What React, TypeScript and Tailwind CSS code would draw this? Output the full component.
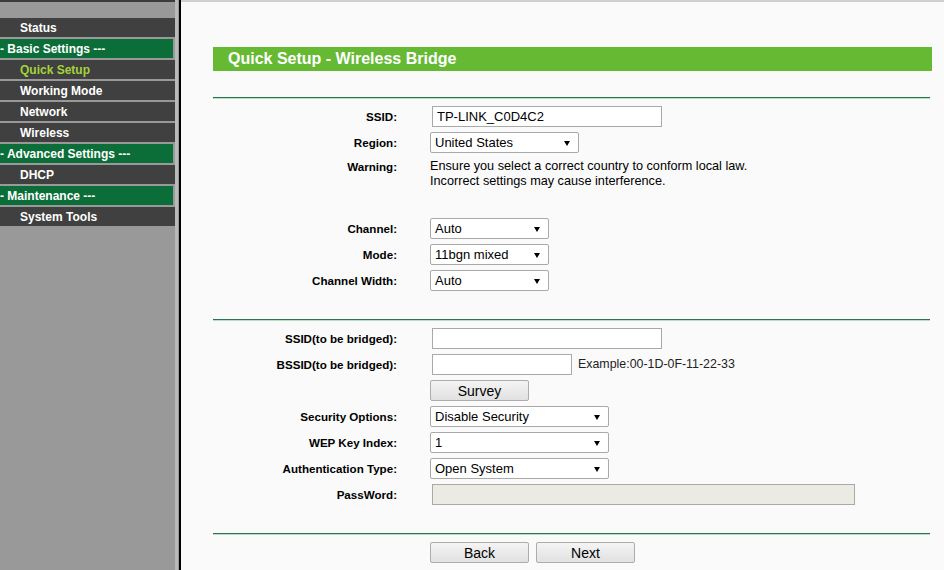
const menu = [
  { label: "Status", kind: "item" },
  { label: "- Basic Settings ---", kind: "group" },
  { label: "Quick Setup", kind: "active" },
  { label: "Working Mode", kind: "item" },
  { label: "Network", kind: "item" },
  { label: "Wireless", kind: "item" },
  { label: "- Advanced Settings ---", kind: "group" },
  { label: "DHCP", kind: "item" },
  { label: "- Maintenance ---", kind: "group" },
  { label: "System Tools", kind: "item" },
]

function Arrow() {
  return (
    <svg width="6" height="5" viewBox="0 0 6 5">
      <path d="M0 0H6L3 5Z" fill="#000" />
    </svg>
  )
}

function SelectBox({ value, width }: { value: string; width: string }) {
  return (
    <div
      className={
        "flex items-center justify-between h-[21px] border border-[#a9a9a9] rounded-[2px] bg-white pl-[4px] pr-[8px] pt-[1px] text-[13px] text-black " +
        width
      }
    >
      <span>{value}</span>
      <Arrow />
    </div>
  )
}

function TextBox({ value, width, disabled }: { value?: string; width: string; disabled?: boolean }) {
  return (
    <div
      className={
        "ml-[2px] flex items-center h-[21px] border border-[#a9a9a9] pl-[4px] pt-[1px] text-[13px] text-black " +
        (disabled ? "bg-[#ebebe4] " : "bg-white ") +
        width
      }
    >
      {value}
    </div>
  )
}

function Btn({ label }: { label: string }) {
  return (
    <div className="flex items-center justify-center w-[99px] h-[21px] border border-[#adadad] rounded-[2px] bg-gradient-to-b from-[#f4f4f4] to-[#e1e1e1] pt-[1px] text-[14px] text-black">
      {label}
    </div>
  )
}

function Row({ label, children }: { label: string; children: React.ReactNode }) {
  return (
    <div className="flex items-center h-[21px]">
      <div className="w-[184px] text-right text-[11.6px] font-bold text-black">{label}</div>
      <div className="ml-[33px] flex items-center">{children}</div>
    </div>
  )
}

function Divider() {
  return (
    <div className="w-[717px] h-[2px] border-t border-[#2b7450] bg-[#b9dcc7]" />
  )
}

export default function App() {
  return (
    <div className="flex w-[944px] h-[570px] overflow-hidden font-['Liberation_Sans',Arial,sans-serif]">
      {/* left menu */}
      <div className="w-[175px] shrink-0 bg-[#999999] border-t-2 border-[#3c3c3c] pt-[16px] flex flex-col gap-[2px]">
        {menu.map((m, i) =>
          m.kind === "group" ? (
            <div
              key={i}
              className="w-[173px] h-[19px] bg-[#0b6e38] text-white text-[12px] font-bold leading-[20px] whitespace-nowrap"
            >
              {m.label}
            </div>
          ) : (
            <div
              key={i}
              className={
                "w-[175px] h-[19px] bg-[#404040] text-[12px] font-bold leading-[20px] pl-[20px] " +
                (m.kind === "active" ? "text-[#a3d33b]" : "text-white")
              }
            >
              {m.label}
            </div>
          )
        )}
      </div>
      <div className="w-[3px] shrink-0 bg-[#b9b9b9]" />
      <div className="w-[1px] shrink-0 bg-[#9a9a9a]" />
      <div className="w-[2px] shrink-0 bg-black" />

      {/* main */}
      <div className="flex-1 bg-[#fafafa] border-t-2 border-[#cfcfcf] pl-[32px] pt-[45px]">
        <div className="w-[719px] h-[24px] bg-[#66b933] pl-[15px] text-white text-[16px] font-bold leading-[24px]">
          Quick Setup - Wireless Bridge
        </div>

        <div className="mt-[26px]">
          <Divider />
        </div>

        <div className="mt-[7px] flex flex-col gap-[5px]">
          <Row label="SSID:">
            <TextBox value="TP-LINK_C0D4C2" width="w-[230px]" />
          </Row>
          <Row label="Region:">
            <SelectBox value="United States" width="w-[149px]" />
          </Row>
        </div>

        <div className="mt-[6px] flex leading-[15px]">
          <div className="w-[184px] text-right text-[11.6px] font-bold text-black">Warning:</div>
          <div className="ml-[33px] text-[12.7px] text-black">
            Ensure you select a correct country to conform local law.
            <br />
            Incorrect settings may cause interference.
          </div>
        </div>

        <div className="mt-[29px] flex flex-col gap-[5px]">
          <Row label="Channel:">
            <SelectBox value="Auto" width="w-[119px]" />
          </Row>
          <Row label="Mode:">
            <SelectBox value="11bgn mixed" width="w-[119px]" />
          </Row>
          <Row label="Channel Width:">
            <SelectBox value="Auto" width="w-[119px]" />
          </Row>
        </div>

        <div className="mt-[28px]">
          <Divider />
        </div>

        <div className="mt-[7px] flex flex-col gap-[5px]">
          <Row label="SSID(to be bridged):">
            <TextBox width="w-[230px]" />
          </Row>
          <Row label="BSSID(to be bridged):">
            <TextBox width="w-[140px]" />
            <span className="ml-[6px] text-[12.4px] text-[#222]">Example:00-1D-0F-11-22-33</span>
          </Row>
          <Row label="">
            <Btn label="Survey" />
          </Row>
          <Row label="Security Options:">
            <SelectBox value="Disable Security" width="w-[179px]" />
          </Row>
          <Row label="WEP Key Index:">
            <SelectBox value="1" width="w-[179px]" />
          </Row>
          <Row label="Authentication Type:">
            <SelectBox value="Open System" width="w-[179px]" />
          </Row>
          <Row label="PassWord:">
            <TextBox width="w-[423px]" disabled />
          </Row>
        </div>

        <div className="mt-[28px]">
          <Divider />
        </div>

        <div className="mt-[7px] flex gap-[7px] pl-[217px]">
          <Btn label="Back" />
          <Btn label="Next" />
        </div>
      </div>
    </div>
  )
}
